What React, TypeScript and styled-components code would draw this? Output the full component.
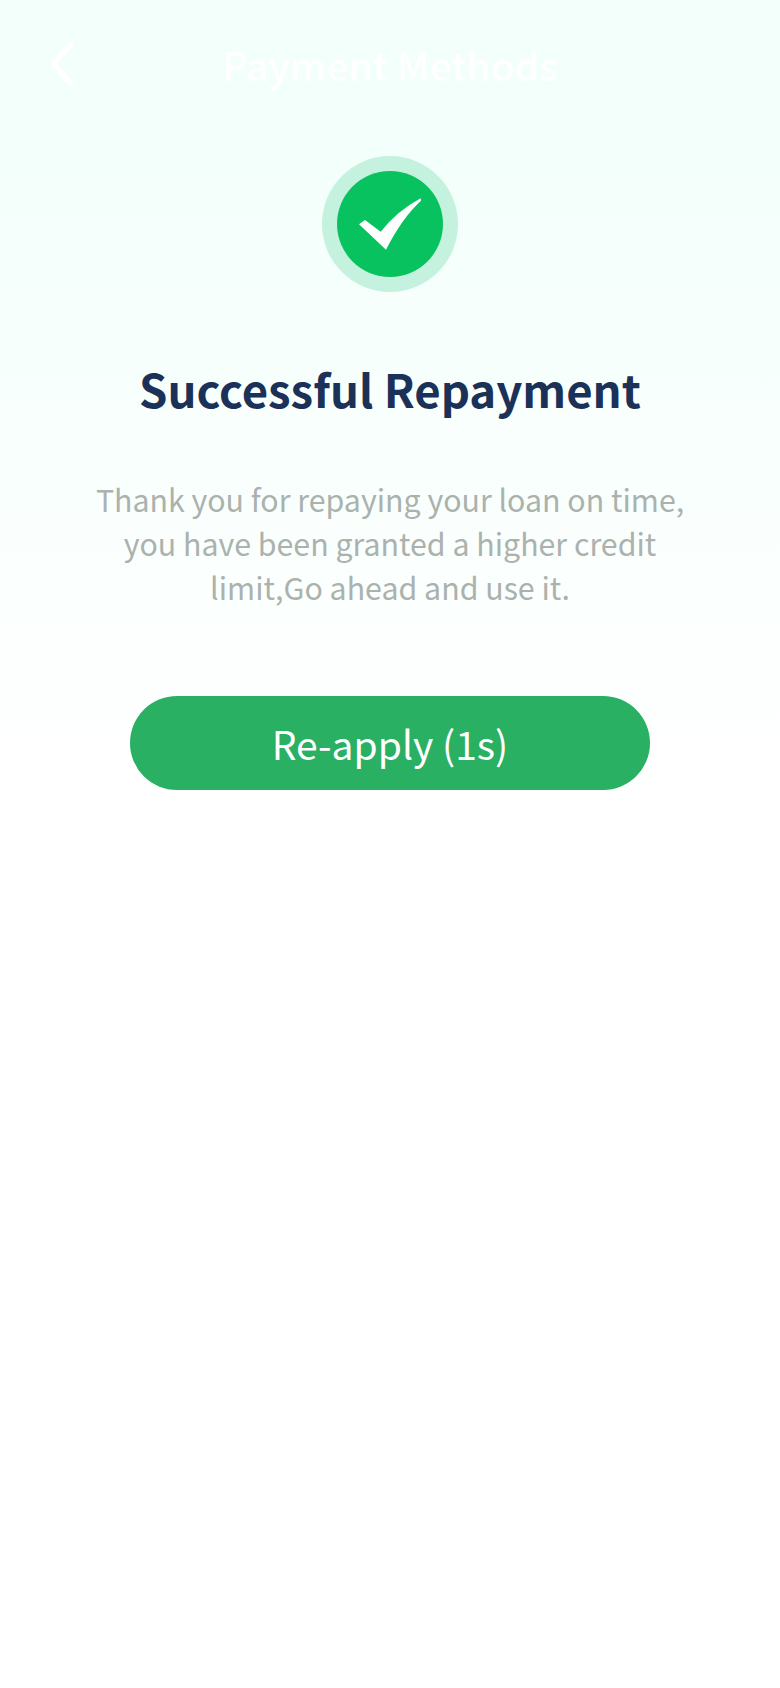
import React from 'react';
import styled, { createGlobalStyle } from 'styled-components';

const GlobalStyle = createGlobalStyle`
  html, body {
    margin: 0;
    padding: 0;
    background: #ffffff;
  }
  * {
    box-sizing: border-box;
  }
`;

const Page = styled.div`
  min-height: 1688px;
  display: flex;
  flex-direction: column;
  align-items: center;
  font-family: 'Noto Sans CJK SC', 'Noto Sans', sans-serif;
  background: linear-gradient(180deg, #f3fffb 0px, #f3fffb 130px, #ffffff 800px);
`;

const TopBar = styled.header`
  width: 100%;
  height: 128px;
  display: grid;
  grid-template-columns: 130px 1fr 130px;
  align-items: center;
`;

const BackButton = styled.button`
  width: 34px;
  height: 50px;
  margin-left: 46px;
  padding: 0;
  border: 0;
  background: none;
  display: flex;
`;

const TopTitle = styled.h1`
  margin: 0;
  text-align: center;
  color: #ffffff;
  font-size: 39px;
  font-weight: 500;
  line-height: 56px;
`;

const SuccessBadge = styled.div`
  width: 136px;
  height: 136px;
  margin-top: 28px;
  border-radius: 50%;
  background: #c4f2de;
  display: flex;
  align-items: center;
  justify-content: center;
`;

const SuccessDisc = styled.div`
  width: 106px;
  height: 106px;
  border-radius: 50%;
  background: #08c25f;
  display: flex;
  align-items: center;
  justify-content: center;
`;

const Heading = styled.h2`
  margin: 60px 0 0;
  color: #1b3158;
  font-size: 45.5px;
  font-weight: 700;
  line-height: 72px;
  text-align: center;
`;

const Message = styled.p`
  margin: 53px 0 0;
  width: 610px;
  color: #abb2ad;
  font-size: 30.33px;
  font-weight: 400;
  line-height: 44px;
  text-align: center;
`;

const ApplyButton = styled.button`
  width: 520px;
  height: 94px;
  margin-top: 87px;
  border: 0;
  border-radius: 47px;
  background: #29b063;
  color: #ffffff;
  font-family: inherit;
  font-size: 39px;
  font-weight: 400;
`;

const App: React.FC = () => (
  <>
    <GlobalStyle />
    <Page>
      <TopBar>
        <BackButton aria-label="Back">
          <svg width="34" height="50" viewBox="0 0 34 50" fill="none">
            <path
              d="M24.5 5.8 L7.5 24.5 L24.5 44.2"
              stroke="#ffffff"
              strokeWidth="5.5"
              strokeLinecap="round"
              strokeLinejoin="round"
            />
          </svg>
        </BackButton>
        <TopTitle>Payment Methods</TopTitle>
      </TopBar>
      <SuccessBadge>
        <SuccessDisc>
          <svg width="106" height="106" viewBox="15 15 106 106">
            <path d="M37 68.3 L43 64 L58.7 75.7 Q75 55 98.7 42.3 L99 44.7 Q80 62 64 93.7 Z" fill="#ffffff" />
          </svg>
        </SuccessDisc>
      </SuccessBadge>
      <Heading>Successful Repayment</Heading>
      <Message>Thank you for repaying your loan on time, you have been granted a higher credit limit,Go ahead and use it.</Message>
      <ApplyButton>Re-apply (1s)</ApplyButton>
    </Page>
  </>
);

export default App;
